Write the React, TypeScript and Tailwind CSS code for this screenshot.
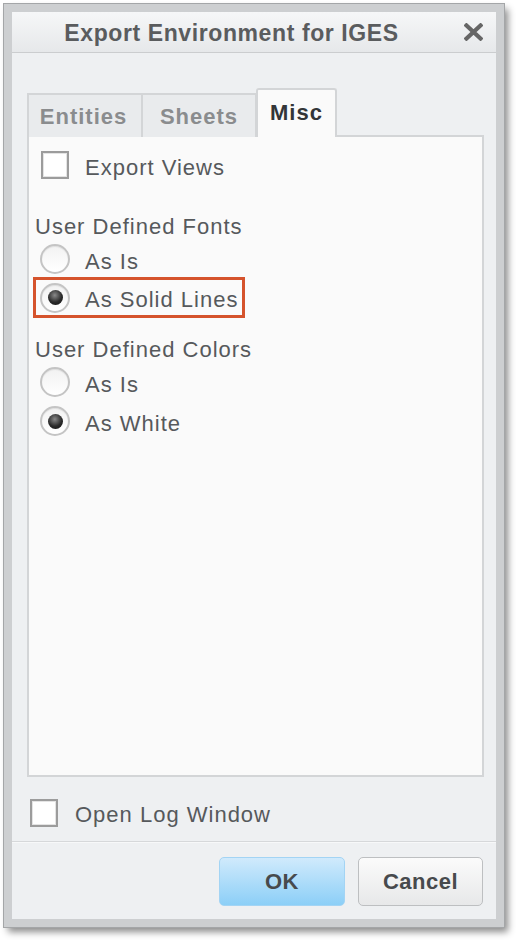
import React from "react";

const font = { fontFamily: '"Liberation Sans", Arial, sans-serif' };

function Checkbox() {
  return (
    <span className="inline-block w-[28px] h-[28px] shrink-0 border-2 border-[#9c9c9c] bg-white shadow-[inset_0_0_0_1px_#e4e4e4]" />
  );
}

function Radio({ checked }: { checked?: boolean }) {
  return (
    <span className="relative inline-flex w-[30px] h-[30px] shrink-0 items-center justify-center rounded-full border-2 border-[#c4c4c4] bg-[linear-gradient(#f2f2f2,#ffffff)] shadow-[inset_0_1px_1px_rgba(0,0,0,0.08)]">
      {checked && (
        <span className="w-[15px] h-[15px] rounded-full bg-[radial-gradient(circle_at_45%_35%,#8a8a8a_0%,#2a2a2a_55%,#111_100%)]" />
      )}
    </span>
  );
}

function RadioRow({ label, checked }: { label: string; checked?: boolean }) {
  return (
    <div className="flex items-center gap-[15px]">
      <Radio checked={checked} />
      <span className="relative top-[2px]">{label}</span>
    </div>
  );
}

export default function App() {
  return (
    <div className="w-[518px] h-[941px] bg-white pt-[4px] pl-[4px]" style={font}>
      <div className="w-[500px] h-[923px] flex flex-col border-[8px] border-[#cdcfd1] outline outline-1 outline-[#a4a6a8] shadow-[4px_5px_7px_rgba(0,0,0,0.45)] bg-[#eef0f2]">
        {/* Title bar */}
        <div className="h-[41px] flex items-center border-b border-[#cbcdcf] bg-[linear-gradient(#f6f7f8,#e6e8ea)]">
          <div className="flex-1 text-center text-[23px] font-bold tracking-[0.6px] text-[#5a5c5e] relative top-[1px]">
            Export Environment for IGES
          </div>
          <div className="w-[45px] flex items-center justify-center">
            <svg width="19" height="18" viewBox="0 0 19 18">
              <path d="M2.5 2.5 L16.5 15.5 M16.5 2.5 L2.5 15.5" stroke="#666" strokeWidth="4.2" strokeLinecap="square" />
            </svg>
          </div>
        </div>

        {/* Body */}
        <div className="flex-1 flex flex-col pl-[15px] pr-[12px] pt-[35px]">
          {/* Tabs */}
          <div className="flex items-end h-[49px] -mb-[2px] relative z-10 text-[22px] font-bold tracking-[1px]">
            <div className="w-[116px] h-[44px] flex items-center justify-center pr-[3px] border-2 border-b-0 border-[#d3d5d7] bg-[#e9ebed] text-[#8a8c8e]">
              Entities
            </div>
            <div className="w-[114px] h-[44px] flex items-center justify-center border-2 border-l-0 border-b-0 border-[#d3d5d7] bg-[#e9ebed] text-[#8a8c8e]">
              Sheets
            </div>
            <div className="w-[81px] h-[49px] flex items-center justify-center pb-[3px] -ml-[1px] rounded-t-[3px] border-2 border-b-0 border-[#d3d5d7] bg-[#fafafa] text-[#333538]">
              Misc
            </div>
          </div>

          {/* Panel */}
          <div className="h-[642px] border-2 border-[#d3d5d7] bg-[#fafafa] text-[22px] tracking-[1px] text-[#56595c] flex flex-col">
            <div className="mt-[12px] h-[32px] pl-[12px] flex items-center gap-[16px]">
              <Checkbox />
              <span className="relative top-[2px]">Export Views</span>
            </div>

            <div className="mt-[26px] h-[34px] pl-[6px] flex items-center">
              <span className="relative top-[2px]">User Defined Fonts</span>
            </div>
            <div className="h-[36px] pl-[11px] flex items-center">
              <RadioRow label="As Is" />
            </div>
            <div className="h-[41px] ml-[4px] w-[212px] pl-[4px] flex items-center border-[3px] border-[#d5532c]">
              <RadioRow label="As Solid Lines" checked />
            </div>

            <div className="mt-[12px] h-[34px] pl-[6px] flex items-center">
              <span className="relative top-[2px]">User Defined Colors</span>
            </div>
            <div className="h-[36px] pl-[11px] flex items-center">
              <RadioRow label="As Is" />
            </div>
            <div className="mt-[3px] h-[36px] pl-[11px] flex items-center">
              <RadioRow label="As White" checked />
            </div>
          </div>

          {/* Log window */}
          <div className="mt-[21px] mb-[12px] h-[29px] pl-[3px] flex items-center gap-[17px] text-[22px] tracking-[1px] text-[#56595c]">
            <Checkbox />
            <span className="relative top-[2px]">Open Log Window</span>
          </div>
        </div>

        {/* Buttons */}
        <div className="border-t border-[#d6d8da] shadow-[inset_0_1px_0_#f7f8f9] pt-[15px] pb-[13px] pr-[13px] flex justify-end gap-[13px] text-[22px] font-bold tracking-[0.5px] text-[#474a4d]">
          <button className="w-[126px] h-[49px] rounded-[5px] border border-[#a3d4f4] bg-[linear-gradient(#d0eafc,#8ccff7)]">
            OK
          </button>
          <button className="w-[125px] h-[49px] rounded-[5px] border border-[#bdbfc1] bg-[linear-gradient(#fbfbfb,#e7e8e9)]">
            Cancel
          </button>
        </div>
      </div>
    </div>
  );
}
